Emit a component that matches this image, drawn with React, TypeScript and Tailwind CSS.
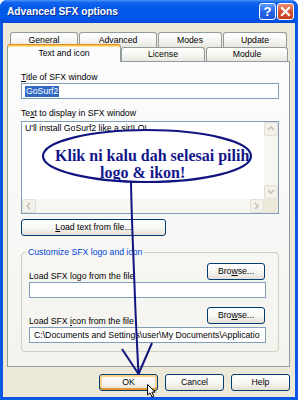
import React from "react";

const btnBase =
  "flex items-center justify-center rounded-[3px] border border-[#003C74] bg-[linear-gradient(180deg,#FFFFFF_0%,#F6F5F1_55%,#E3E0D6_100%)] text-black";

function Chevron({ dir }: { dir: "up" | "down" | "left" | "right" }) {
  const pts: Record<string, string> = {
    up: "1,5 4,2 7,5",
    down: "1,2 4,5 7,2",
    left: "5,1 2,4 5,7",
    right: "2,1 5,4 2,7",
  };
  return (
    <svg width="8" height="8" viewBox="0 0 8 8">
      <polyline points={pts[dir]} fill="none" stroke="#C6C3B4" strokeWidth="1.6" />
    </svg>
  );
}

function ScrollBtn({ dir }: { dir: "up" | "down" | "left" | "right" }) {
  return (
    <div className="flex h-[14px] w-[14px] shrink-0 items-center justify-center rounded-[2px] border border-[#E2E0D5] bg-[#F2F1EB]">
      <Chevron dir={dir} />
    </div>
  );
}

function Tab({ label, className }: { label: string; className: string }) {
  return (
    <div
      className={
        "flex items-center justify-center rounded-t-[3px] border border-b-0 border-[#919B9C] bg-[linear-gradient(180deg,#FFFFFF_0%,#F4F4F0_60%,#E8E7E0_100%)] " +
        className
      }
    >
      {label}
    </div>
  );
}

export default function App() {
  return (
    <div className="relative h-[400px] w-[298px] overflow-hidden bg-white font-['Liberation_Sans',Arial,sans-serif] text-[8.7px] leading-[11px] text-black">
      <div className="flex h-full flex-col rounded-t-[7px] bg-[#0A57E4]">
        {/* Title bar */}
        <div className="flex h-[23px] items-center gap-[1px] rounded-t-[7px] bg-[linear-gradient(180deg,#4A95F8_0%,#1465F0_10%,#0056E6_40%,#005AEE_75%,#0047D6_100%)] pl-[7px] pr-[4px]">
          <span className="flex-1 text-[10.2px] font-bold text-white [text-shadow:1px_1px_0_#0B2A8C]">
            Advanced SFX options
          </span>
          <div className="flex h-[17px] w-[17px] items-center justify-center rounded-[3px] border border-white bg-[linear-gradient(180deg,#5C9BFB_0%,#2A66E8_50%,#1C54DA_100%)] text-[13px] font-bold leading-none text-white">
            ?
          </div>
          <div className="flex h-[17px] w-[17px] items-center justify-center rounded-[3px] border border-white bg-[linear-gradient(180deg,#EB8F72_0%,#D8532F_50%,#C43E1C_100%)]">
            <svg width="11" height="11" viewBox="0 0 11 11">
              <path d="M2 2 L9 9 M9 2 L2 9" stroke="white" strokeWidth="2.2" strokeLinecap="square" />
            </svg>
          </div>
        </div>

        {/* Body */}
        <div className="mx-[3px] mb-[3px] flex flex-1 flex-col bg-[#ECE9D8] pl-[4px] pr-[5px] pt-[9px]">
          {/* Tabs row 1 */}
          <div className="flex h-[15px] gap-[1px] pl-[3px]">
            <Tab label="General" className="w-[68px]" />
            <Tab label="Advanced" className="w-[78px]" />
            <Tab label="Modes" className="w-[64px]" />
            <Tab label="Update" className="w-[64px]" />
          </div>
          {/* Tabs row 2 */}
          <div className="flex h-[14px] items-end">
            <div className="relative z-10 -mb-px flex h-[18px] w-[114px] items-center justify-center rounded-t-[3px] border border-b-0 border-[#919B9C] border-t-[#E68B2C] bg-[#FCFCFE] pb-[1px] shadow-[inset_0_1px_0_#FFC83C,inset_0_2px_0_#FFE3A0]">
              Text and icon
            </div>
            <Tab label="License" className="h-[14px] w-[84px]" />
            <Tab label="Module" className="ml-[1px] h-[14px] w-[82px]" />
          </div>

          {/* Panel */}
          <div className="flex h-[306px] w-[283px] flex-col border border-[#919B9C] bg-[linear-gradient(180deg,#FCFCFE_0%,#F4F3EE_100%)] pl-[13px] pt-[10px]">
            <div>
              <span className="underline underline-offset-[1px]">T</span>itle of SFX window
            </div>
            <div className="flex h-[16px] w-[258px] items-center border border-[#7F9DB9] bg-white pl-[3px]">
              <span className="bg-[#316AC5] px-[1px] text-white">GoSurf2</span>
            </div>
            <div className="mt-[9px]">
              Te<span className="underline underline-offset-[1px]">x</span>t to display in SFX window
            </div>
            <div className="mt-[2px] grid h-[93px] w-[258px] grid-cols-[1fr_14px] grid-rows-[1fr_14px] border border-[#7F9DB9] bg-white">
              <div className="overflow-hidden whitespace-nowrap pl-[3px] pt-[1px]">U'll install GoSurf2 like a sir!LOL</div>
              <div className="flex flex-col bg-[#F7F6F1]">
                <ScrollBtn dir="up" />
                <div className="flex-1" />
                <ScrollBtn dir="down" />
              </div>
              <div className="flex bg-[#F7F6F1]">
                <ScrollBtn dir="left" />
                <div className="flex-1" />
                <ScrollBtn dir="right" />
              </div>
              <div className="bg-[#ECE9D8]" />
            </div>
            <div className={btnBase + " mt-[5px] h-[17px] w-[145px]"}>
              <span>
                <span className="underline underline-offset-[1px]">L</span>oad text from file...
              </span>
            </div>

            <fieldset className="mt-[10px] h-[106px] w-[258px] rounded-[4px] border border-[#D0D0BF] px-0 pb-0">
              <legend className="ml-[4px] px-[2px] leading-[12px] text-[#0046D5]">Customize SFX logo and icon</legend>
              <div className="ml-[7px] flex w-[237px] flex-col">
                <div className="mt-[5px] flex h-[19px] items-end justify-between">
                  <span>Load SFX logo from the file</span>
                  <div className={btnBase + " mr-[1px] h-[17px] w-[58px] self-start"}>
                    <span>
                      Bro<span className="underline underline-offset-[1px]">w</span>se...
                    </span>
                  </div>
                </div>
                <div className="h-[16px] w-[237px] border border-[#7F9DB9] bg-white" />
                <div className="mt-[9px] flex h-[20px] items-end justify-between">
                  <span>
                    Load SFX <span className="underline underline-offset-[1px]">i</span>con from the file
                  </span>
                  <div className={btnBase + " mr-[1px] h-[17px] w-[58px] self-start"}>
                    <span>
                      Bro<span className="underline underline-offset-[1px]">w</span>se...
                    </span>
                  </div>
                </div>
                <div className="flex h-[16px] w-[237px] items-center overflow-hidden whitespace-nowrap border border-[#7F9DB9] bg-white pl-[4px]">
                  C:\Documents and Settings\user\My Documents\Applicatio
                </div>
              </div>
            </fieldset>
          </div>

          {/* Bottom buttons */}
          <div className="mt-[7px] flex justify-end gap-[7px]">
            <div className={btnBase + " h-[17px] w-[59px] shadow-[inset_0_-2px_0_#E5972C,inset_0_0_0_2px_#FBD48C]"}>OK</div>
            <div className={btnBase + " h-[17px] w-[59px]"}>Cancel</div>
            <div className={btnBase + " h-[17px] w-[59px]"}>Help</div>
          </div>
        </div>
      </div>

      {/* Hand-drawn annotation */}
      <svg className="pointer-events-none absolute left-0 top-0" width="298" height="400" viewBox="0 0 298 400">
        <ellipse cx="147" cy="156" rx="104" ry="26" fill="none" stroke="#10157F" strokeWidth="2.2" />
        <path
          d="M131 182 C131.5 215 133 245 134.5 285 C135.5 315 137 345 138.5 374"
          fill="none"
          stroke="#10157F"
          strokeWidth="2"
        />
        <path d="M122 349 L138.5 374 L152 343" fill="none" stroke="#10157F" strokeWidth="2" strokeLinejoin="round" />
      </svg>
      <div className="pointer-events-none absolute left-[55px] top-[147px] whitespace-nowrap font-['Liberation_Serif',serif] text-[16px] font-bold leading-[17px] text-[#13168A]">
        Klik ni kalu dah selesai pilih
      </div>
      <div className="pointer-events-none absolute left-[100px] top-[164px] whitespace-nowrap font-['Liberation_Serif',serif] text-[16px] font-bold leading-[17px] text-[#13168A]">
        logo &amp; ikon!
      </div>
      {/* Mouse cursor */}
      <svg className="pointer-events-none absolute left-[147px] top-[384px]" width="11" height="15" viewBox="0 0 11 15">
        <path d="M0.5 0.5 L0.5 11 L3 8.8 L5 13 L6.8 12.2 L4.9 8.1 L8.2 8.1 Z" fill="white" stroke="black" strokeWidth="1" strokeLinejoin="round" />
      </svg>
    </div>
  );
}
